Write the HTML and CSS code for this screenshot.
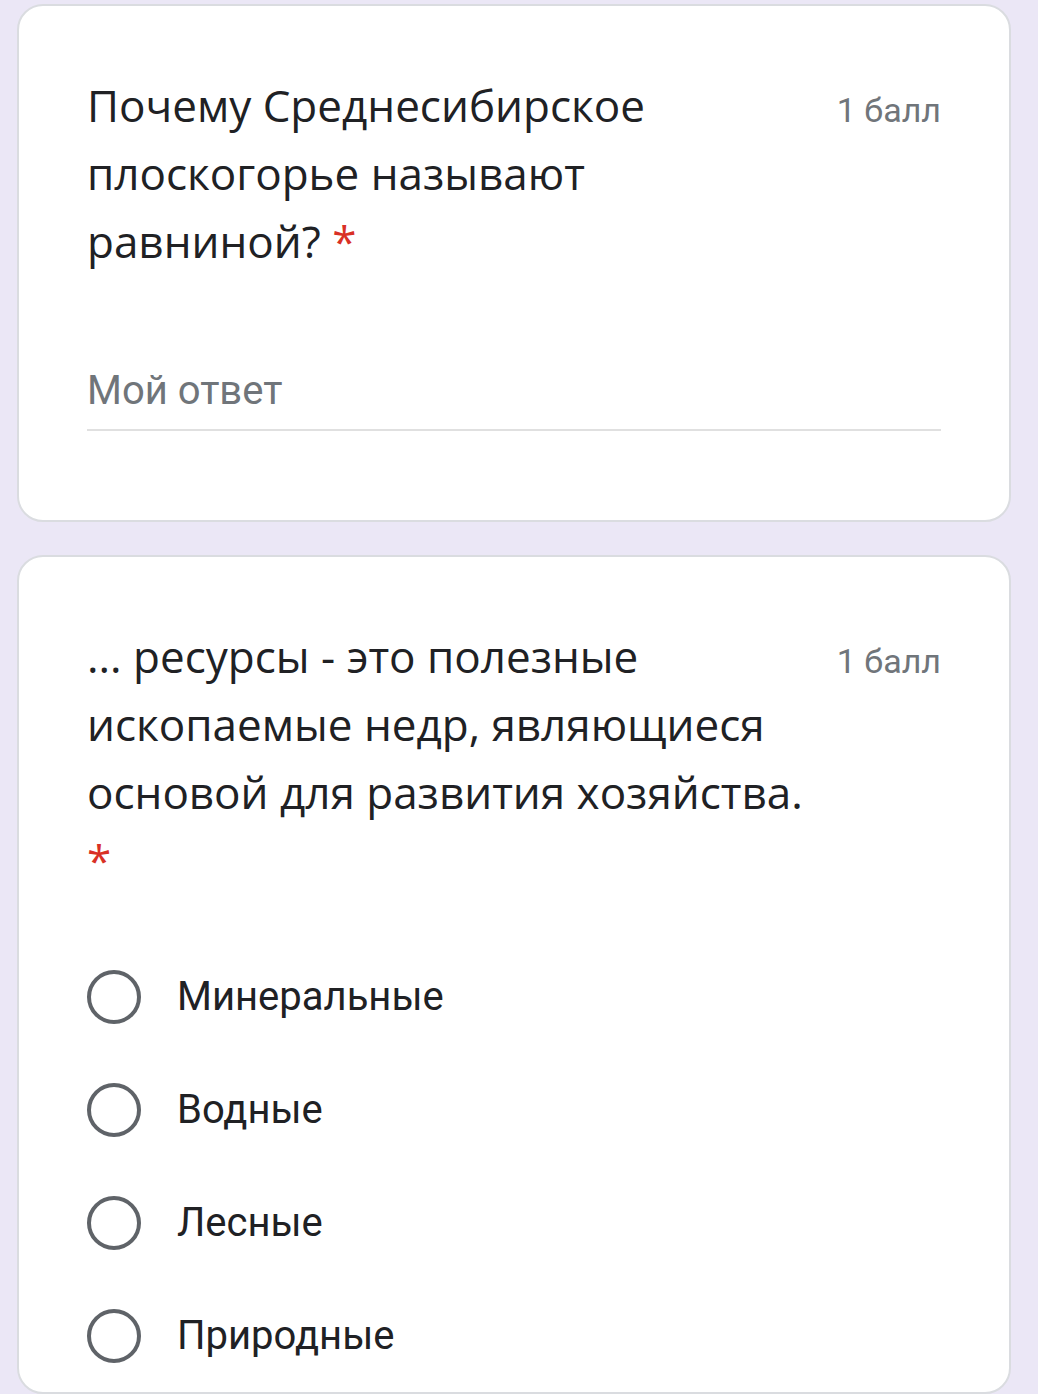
FILE: index.html
```html
<!DOCTYPE html>
<html lang="ru">
<head>
    <meta charset="utf-8">
    <title>Тест</title>
    <link rel="stylesheet" href="styles.css">
</head>
<body>

<div class="card">
    <div class="qHead">
        <div class="qTitle">Почему Среднесибирское плоскогорье называют равниной? <span class="req">*</span></div>
        <div class="qPoints">1 балл</div>
    </div>
    <div class="answer">Мой ответ</div>
</div>

<div class="card">
    <div class="qHead">
        <div class="qTitle">... ресурсы - это полезные ископаемые недр, являющиеся основой для развития хозяйства. <span class="req">*</span></div>
        <div class="qPoints">1 балл</div>
    </div>
    <div class="options">
        <label class="option"><span class="radio"></span>Минеральные</label>
        <label class="option"><span class="radio"></span>Водные</label>
        <label class="option"><span class="radio"></span>Лесные</label>
        <label class="option"><span class="radio"></span>Природные</label>
    </div>
</div>

</body>
</html>
```

FILE: styles.css
```css
body {
    margin: 0;
    padding-top: 4px;
    background-color: #ebe7f6;
    font-family: Roboto, "Noto Sans", sans-serif;
}

.card {
    background-color: #fff;
    border: 2px solid #dadce0;
    border-radius: 26px;
    margin: 0 27px 33px 17px;
    padding: 65px 68px 89px 68px;
}

.qHead {
    display: flex;
    align-items: baseline;
}

.qTitle {
    width: 730px;
    font-family: "Open Sans", sans-serif;
    font-size: 44px;
    line-height: 68px;
    color: #202124;
}

.req {
    color: #d93025;
}

.qPoints {
    margin-left: auto;
    font-size: 34px;
    color: #70757a;
}

.answer {
    margin-top: 88px;
    padding-bottom: 10px;
    border-bottom: 2px solid #e0e0e0;
    font-size: 40px;
    line-height: 56px;
    color: #70757a;
}

.options {
    margin-top: 46px;
    margin-bottom: -89px;
}

.option {
    display: flex;
    align-items: center;
    height: 113px;
    font-size: 40px;
    color: #202124;
}

.radio {
    width: 46px;
    height: 46px;
    border: 4px solid #5f6368;
    border-radius: 50%;
    margin-right: 36px;
}
```
